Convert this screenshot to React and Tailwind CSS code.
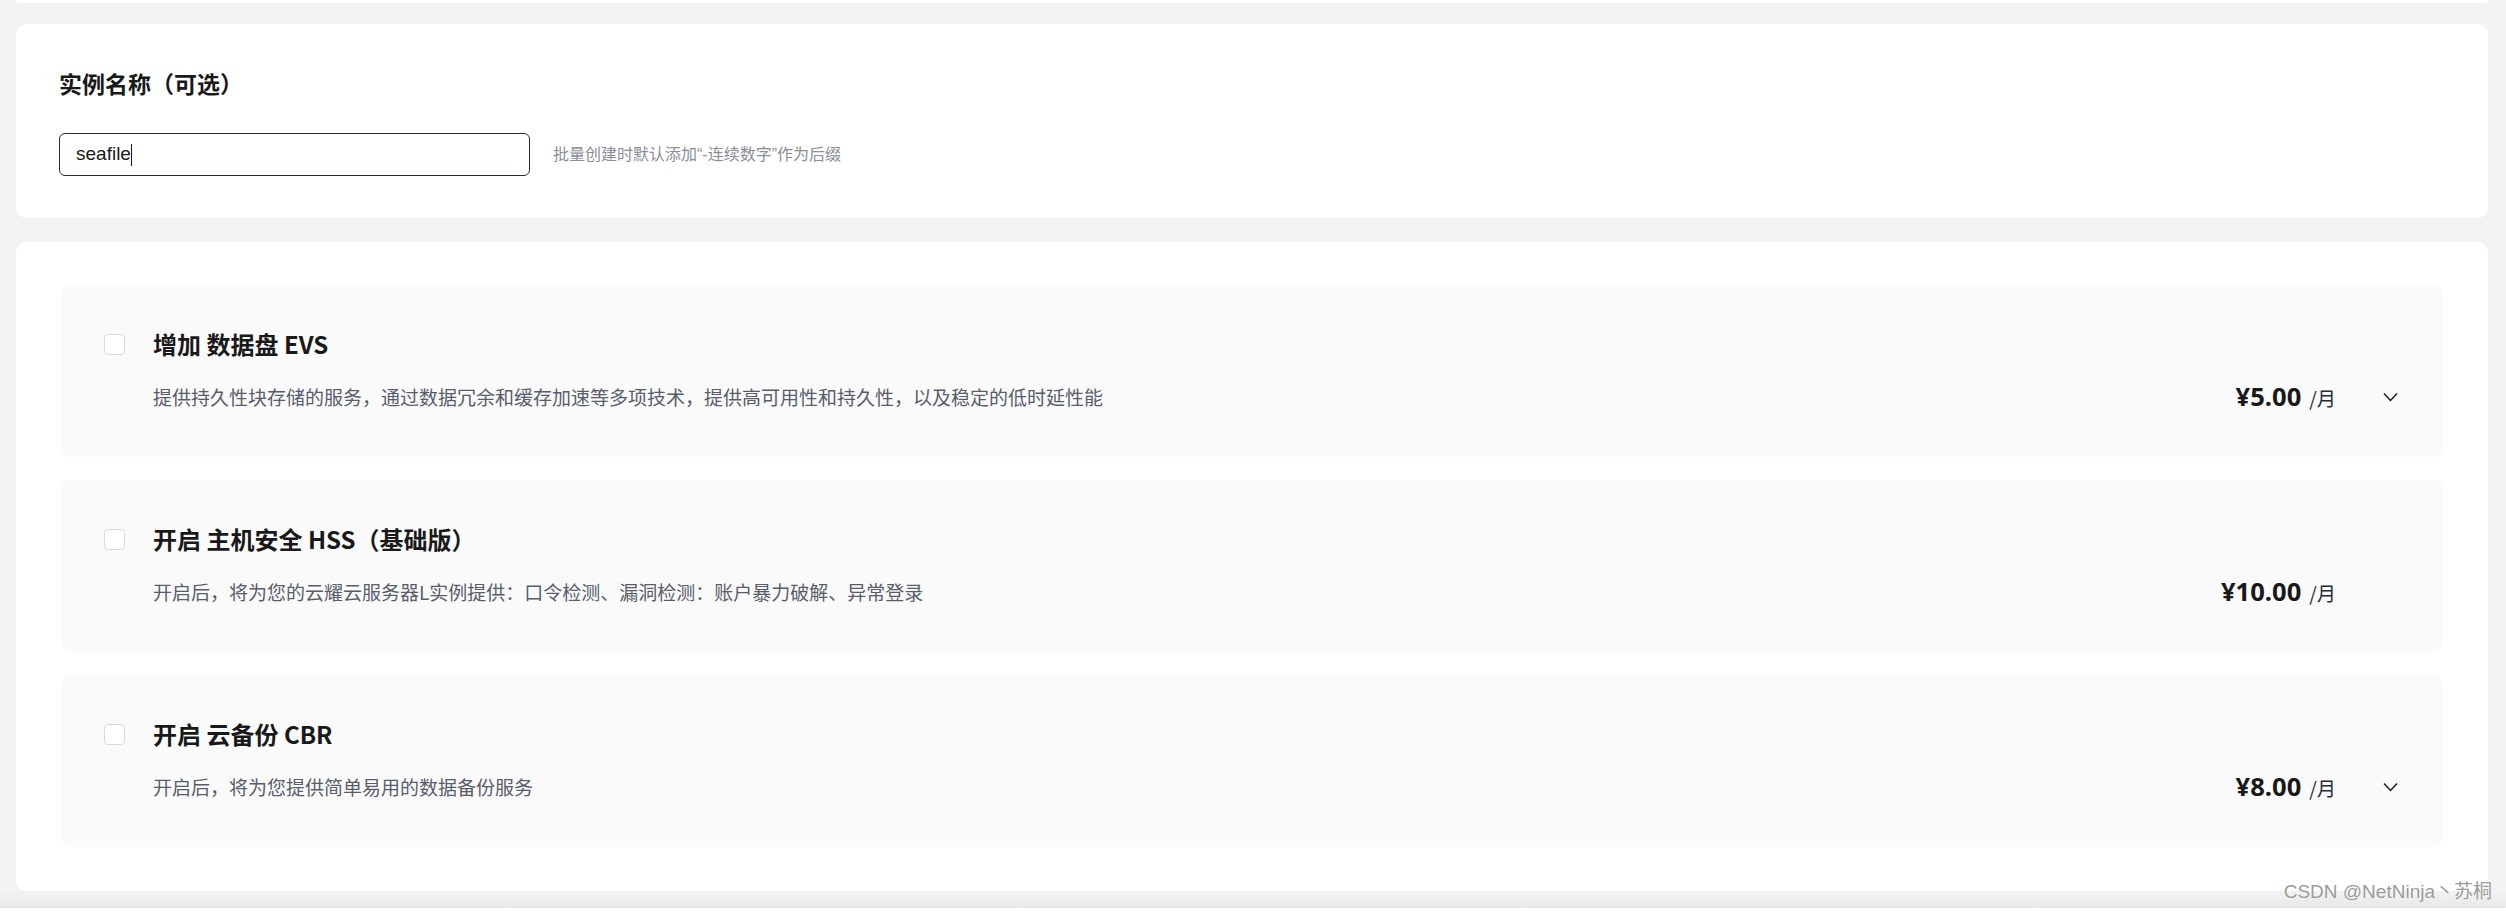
import React from 'react';

const cjk = "font-['Noto_Sans_CJK_SC',sans-serif]";

const ChevronDown = () => (
  <svg width="15" height="10" viewBox="0 0 15 10" fill="none">
    <polyline points="1,1.5 7.5,8.5 14,1.5" stroke="#191919" strokeWidth="1.5" />
  </svg>
);

const addons = [
  {
    title: '增加 数据盘 EVS',
    desc: '提供持久性块存储的服务，通过数据冗余和缓存加速等多项技术，提供高可用性和持久性，以及稳定的低时延性能',
    price: '¥5.00',
    expandable: true,
  },
  {
    title: '开启 主机安全 HSS（基础版）',
    desc: '开启后，将为您的云耀云服务器L实例提供：口令检测、漏洞检测：账户暴力破解、异常登录',
    price: '¥10.00',
    expandable: false,
  },
  {
    title: '开启 云备份 CBR',
    desc: '开启后，将为您提供简单易用的数据备份服务',
    price: '¥8.00',
    expandable: true,
  },
];

const AddonItem = ({ item }) => (
  <div className="h-[172px] bg-[#fafafa] rounded-[10px] pl-[43px] pr-[45px] pt-[43px]">
    {/* Title row */}
    <div className="flex items-center h-[32px]">
      <span className="w-[21px] h-[21px] bg-white border border-[#d9d9d9] rounded-[4px] shrink-0"></span>
      <span className={`ml-[28px] text-[24px] leading-[32px] font-bold text-[#191919] ${cjk}`}>
        {item.title}
      </span>
    </div>

    {/* Description + price */}
    <div className="flex items-center justify-between mt-[22px] h-[30px]">
      <span className={`ml-[49px] text-[19px] leading-[30px] text-[#575d6c] ${cjk}`}>
        {item.desc}
      </span>
      <div className="flex items-center">
        <div className="flex items-baseline">
          <span className="text-[25.6px] font-bold text-[#191919] font-['Noto_Sans',sans-serif] leading-[30px]">
            {item.price}
          </span>
          <span className={`ml-[8px] text-[19.2px] text-[#252b3a] ${cjk}`}>/月</span>
        </div>
        <div className="w-[15px] ml-[47px] flex items-center justify-center">
          {item.expandable && <ChevronDown />}
        </div>
      </div>
    </div>
  </div>
);

export default function App() {
  return (
    <div className="relative w-[2506px] h-[911px] bg-[#f3f3f3] overflow-hidden flex flex-col">
      {/* Previous section edge */}
      <div className="mx-[16px] w-[2472px] h-[3px] bg-white rounded-b-[10px]"></div>

      {/* Instance name */}
      <div className="mt-[21px] mx-[16px] w-[2472px] h-[194px] bg-white rounded-[10px] pl-[43px] pt-[40px]">
        <h3 className={`text-[23px] leading-[38px] font-bold text-[#191919] ${cjk}`}>实例名称（可选）</h3>
        <div className="flex items-center mt-[31px]">
          <div className="w-[471px] h-[43px] border-[1.5px] border-[#252b3a] rounded-[6px] pl-[16px] flex items-center">
            <span className="text-[19px] text-[#191919] font-['Liberation_Sans',sans-serif]">seafile</span>
            <span className="w-[1px] h-[22px] bg-[#191919]"></span>
          </div>
          <span className="ml-[23px] text-[16px] text-[#8a8e99] font-['Liberation_Sans','Noto_Sans_CJK_SC',sans-serif]">
            批量创建时默认添加“-连续数字”作为后缀
          </span>
        </div>
      </div>

      {/* Add-ons */}
      <div className="mt-[24px] mx-[16px] w-[2472px] h-[649px] bg-white rounded-[10px] px-[45px] pt-[43px] flex flex-col gap-[23px]">
        {addons.map((item) => (
          <AddonItem key={item.title} item={item} />
        ))}
      </div>

      <div className="h-[17px] bg-gradient-to-b from-[#f3f3f3] to-[#e8e8e8]"></div>
      <div className="flex-1 bg-white"></div>

      {/* Watermark */}
      <div className="absolute right-[14px] bottom-[5px] text-[19px] text-[#9b9b9b] font-['Liberation_Sans','Noto_Sans_CJK_SC',sans-serif] [text-shadow:0_0_2px_#fff]">
        CSDN @NetNinja丶苏桐
      </div>
    </div>
  );
}
